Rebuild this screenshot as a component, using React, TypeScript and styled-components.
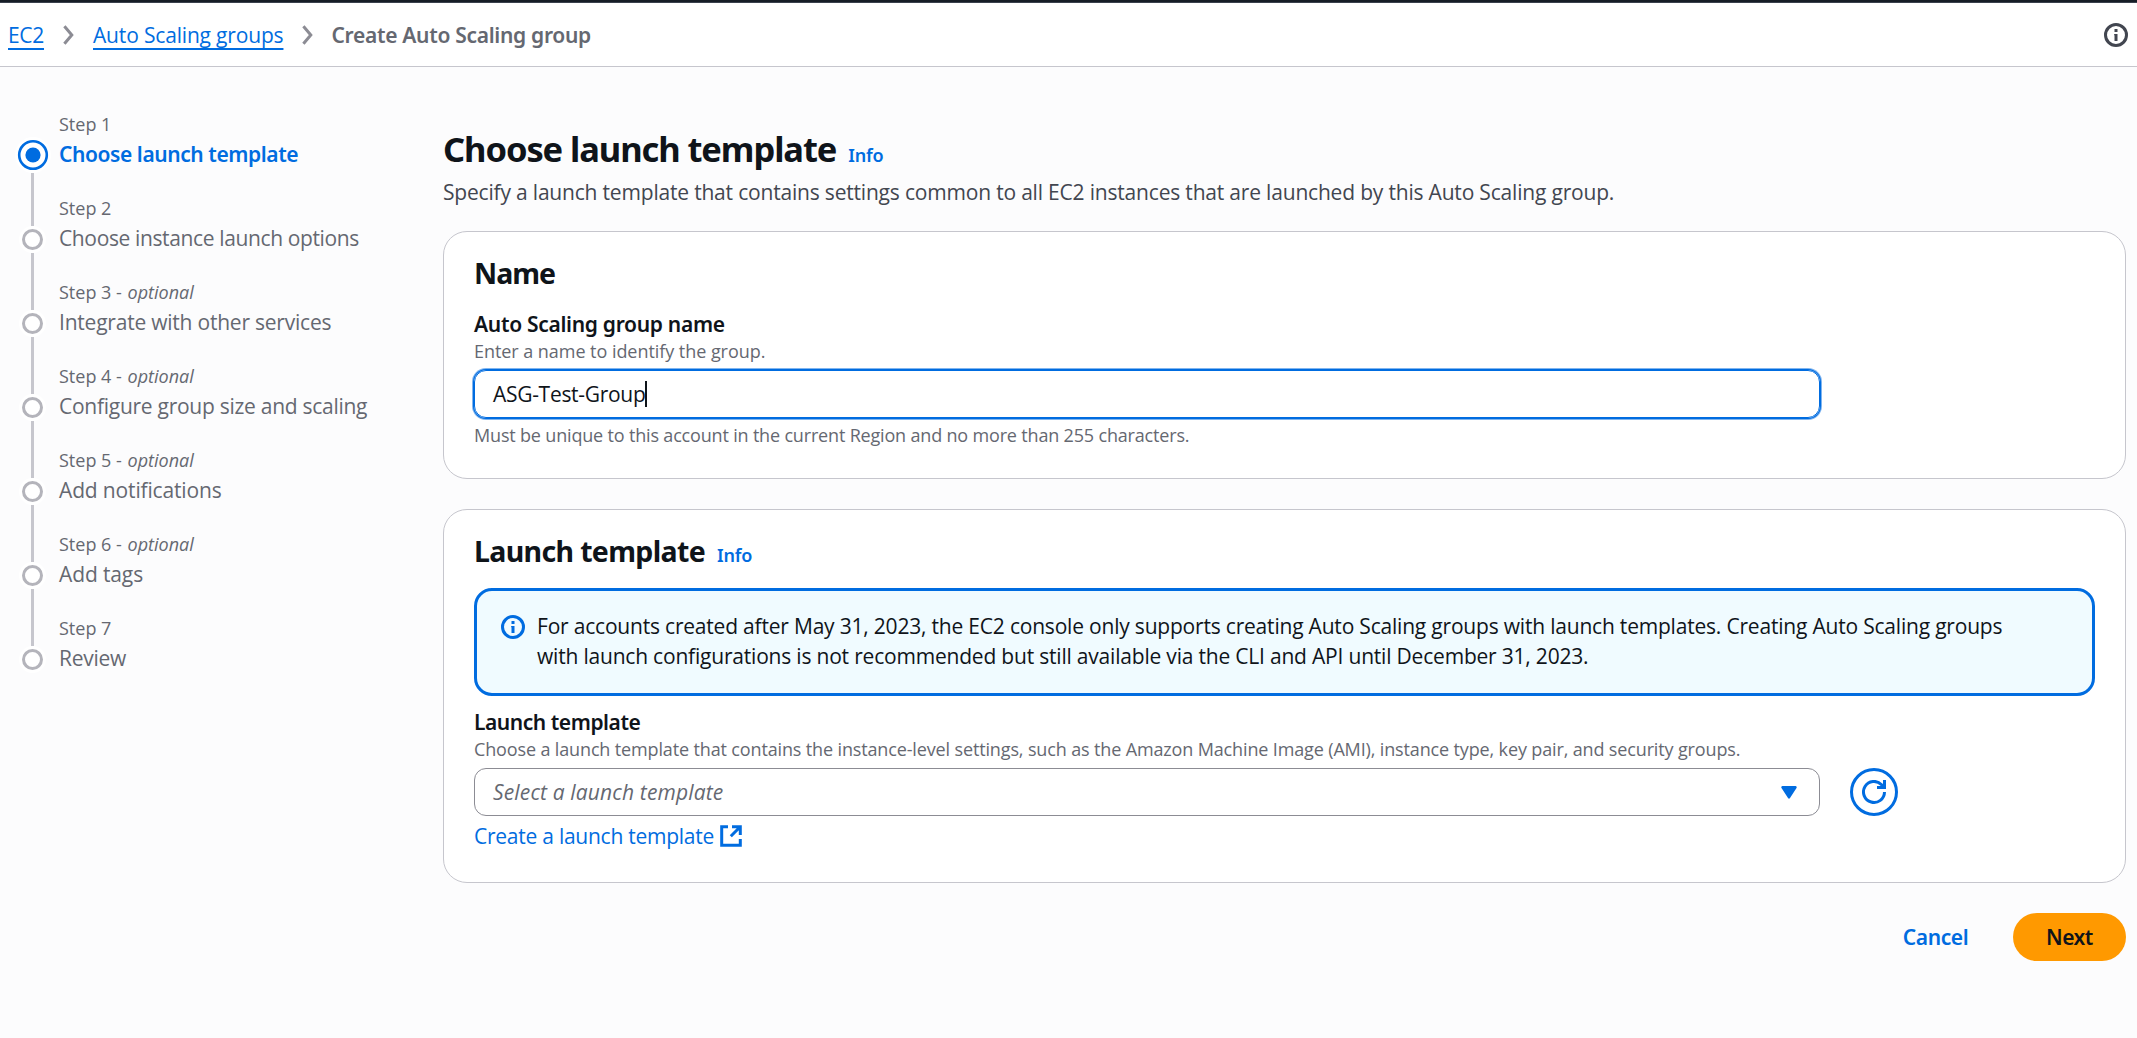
import React from "react";
import styled, { createGlobalStyle } from "styled-components";

const color = {
  blue: "#006ce0",
  text: "#0f141a",
  body: "#424650",
  muted: "#656871",
  line: "#c6c6cd",
  field: "#8c8c94",
  page: "#fcfcfd",
};

const strong = `
  font-family: "Noto Sans", "Open Sans", sans-serif;
  font-weight: 600;
`;

const GlobalStyle = createGlobalStyle`
  *, *::before { box-sizing: border-box; }
  body {
    margin: 0;
    background: ${color.page};
    color: ${color.text};
    font-family: "Open Sans", "Noto Sans", sans-serif;
    font-size: 21px;
    line-height: 30px;
  }
  h1, h2, p, ol { margin: 0; padding: 0; }
  svg { display: block; flex: none; }
`;

type Tracked = { $track?: number };

const Page = styled.div`
  min-height: 1038px;
  white-space: nowrap;
`;

const TopStrip = styled.div`
  height: 3px;
  background: #161d26;
  border-bottom: 1px solid #3a414d;
`;

const BreadcrumbBar = styled.header`
  display: flex;
  align-items: center;
  height: 64px;
  padding: 0 9px 0 8px;
  background: #fff;
  border-bottom: 1px solid ${color.line};
`;

const Breadcrumbs = styled.nav`
  display: flex;
  align-items: center;
  flex: 1;
  gap: 19px;
`;

const Crumb = styled.a<Tracked>`
  color: ${color.blue};
  letter-spacing: ${(p) => p.$track ?? 0}px;
  text-decoration: underline;
  text-decoration-thickness: 2px;
  text-underline-offset: 5px;
  text-decoration-skip-ink: none;
`;

const CurrentCrumb = styled.span`
  ${strong}
  color: ${color.muted};
  margin-left: -1px;
  letter-spacing: -0.3px;
`;

const Body = styled.div`
  display: grid;
  grid-template-columns: 443px 1683px;
`;

const Steps = styled.ol`
  list-style: none;
  padding: 44px 0 0 15px;
`;

const Step = styled.li`
  display: flex;
  gap: 9px;
  height: 84px;
`;

const StepText = styled.div`
  padding-top: 1px;
`;

const Marker = styled.div`
  display: flex;
  flex-direction: column;
  align-items: center;
  width: 35px;
`;

const Rail = styled.div<{ $before?: boolean; $hidden?: boolean }>`
  width: 3px;
  background: ${(p) => (p.$hidden ? "transparent" : color.line)};
  ${(p) => (p.$before ? "height: 31px;" : "flex: 1;")}
`;

const Dot = styled.div`
  width: 27px;
  height: 27px;
  border: 3px solid #fff;
  border-radius: 50%;
  background: #fff;

  &::before {
    content: "";
    display: block;
    width: 21px;
    height: 21px;
    border: 3px solid #b4b4bb;
    border-radius: 50%;
  }
`;

const ActiveMarkerSpace = styled.div`
  height: 26px;
`;

const StepLabel = styled.div`
  color: ${color.muted};
  font-size: 18px;
  line-height: 24px;
  margin-bottom: 3px;

  i { margin-left: 1px; }
`;

const StepTitle = styled.div<Tracked & { $active?: boolean }>`
  ${(p) => (p.$active ? strong : "")}
  color: ${(p) => (p.$active ? color.blue : color.muted)};
  letter-spacing: ${(p) => p.$track ?? 0}px;
`;

const Main = styled.main`
  padding-top: 59px;
`;

const PageTitle = styled.h1`
  ${strong}
  font-size: 34.5px;
  font-weight: 700;
  line-height: 45px;
  letter-spacing: -1.08px;
`;

const PageIntro = styled.p`
  margin-top: 6px;
  color: ${color.body};
  letter-spacing: -0.19px;
`;

const InfoLink = styled.a`
  ${strong}
  margin-left: 12px;
  color: ${color.blue};
  font-size: 18px;
  line-height: 1;
  letter-spacing: -0.2px;
`;

const Card = styled.section<{ $gap: number }>`
  margin-top: ${(p) => p.$gap}px;
  padding: 23px 30px 31px;
  background: #fff;
  border: 1px solid ${color.line};
  border-radius: 24px;
`;

const CardTitle = styled.h2<Tracked>`
  ${strong}
  font-size: 28.5px;
  font-weight: 700;
  line-height: 36px;
  letter-spacing: ${(p) => p.$track}px;
`;

const FieldLabel = styled.div<Tracked & { $gap: number }>`
  ${strong}
  margin-top: ${(p) => p.$gap}px;
  letter-spacing: ${(p) => p.$track}px;
`;

const Hint = styled.p<Tracked>`
  color: ${color.muted};
  font-size: 18px;
  line-height: 24px;
  letter-spacing: ${(p) => p.$track}px;
`;

const TextInput = styled.div`
  display: flex;
  align-items: center;
  width: 1346px;
  height: 48px;
  margin: 7px 0 5px;
  padding-left: 18px;
  border: 1px solid ${color.blue};
  border-radius: 12px;
  box-shadow: 0 0 0 1px ${color.blue}, 0 0 0 2px #80b5ef;
  letter-spacing: -0.3px;
`;

const Caret = styled.span`
  width: 2px;
  height: 26px;
  background: ${color.text};
`;

const Alert = styled.div`
  display: flex;
  gap: 12px;
  height: 108px;
  margin-top: 19px;
  padding: 20px 24px;
  background: #f0fbff;
  border: 3px solid ${color.blue};
  border-radius: 18px;
  letter-spacing: -0.2px;

  svg { margin-top: 4px; }
`;

const SelectRow = styled.div`
  display: flex;
  gap: 30px;
  margin: 7px 0 5px;
`;

const Select = styled.div`
  display: flex;
  align-items: center;
  justify-content: space-between;
  width: 1346px;
  height: 48px;
  padding: 0 22px 0 18px;
  border: 1px solid ${color.field};
  border-radius: 12px;
`;

const Placeholder = styled.span`
  color: ${color.muted};
  font-style: italic;
  letter-spacing: 0.15px;
`;

const RefreshButton = styled.button`
  display: grid;
  place-items: center;
  width: 48px;
  height: 48px;
  padding: 0;
  background: #fff;
  border: 3px solid ${color.blue};
  border-radius: 50%;
`;

const ExternalLink = styled.a`
  display: flex;
  align-items: center;
  gap: 6px;
  color: ${color.blue};
  letter-spacing: -0.25px;
`;

const Actions = styled.footer`
  display: flex;
  justify-content: flex-end;
  margin-top: 30px;
`;

const Button = styled.button<{ $primary?: boolean }>`
  ${strong}
  width: 113px;
  height: 48px;
  margin-left: 21px;
  padding: 0 0 1px;
  border: 0;
  border-radius: 24px;
  background: ${(p) => (p.$primary ? "#ff9900" : "transparent")};
  color: ${(p) => (p.$primary ? color.text : color.blue)};
  font-size: 21px;
  line-height: 30px;
  letter-spacing: ${(p) => (p.$primary ? -0.5 : -0.4)}px;
`;

const Chevron = () => (
  <svg width="11" height="20" viewBox="0 0 11 20" fill="none" stroke={color.field} strokeWidth="3">
    <path d="M1.4 1.2 L8.8 10 L1.4 18.8" />
  </svg>
);

const InfoIcon = ({ stroke }: { stroke: string }) => (
  <svg width="24" height="24" viewBox="0 0 24 24" fill="none" stroke={stroke} strokeWidth="3">
    <circle cx="12" cy="12" r="10.5" />
    <path d="M12 11v7M12 6v3" />
    <path d="M10.3 11.6h1.7" strokeWidth="1.2" />
  </svg>
);

const ActiveDot = () => (
  <svg width="36" height="36" viewBox="0 0 36 36">
    <circle cx="18" cy="18" r="18" fill="#fff" />
    <circle cx="18" cy="18" r="13.8" fill="none" stroke={color.blue} strokeWidth="2.6" />
    <circle cx="18" cy="18" r="7.6" fill={color.blue} />
  </svg>
);

const CaretDown = () => (
  <svg width="16" height="13" viewBox="0 0 16 13" fill={color.blue}>
    <path d="M1.5 0h13a1.2 1.2 0 0 1 1 1.9L9 12a1.2 1.2 0 0 1-2 0L.5 1.9A1.2 1.2 0 0 1 1.5 0z" />
  </svg>
);

const RefreshIcon = () => (
  <svg width="24" height="24" viewBox="0 0 24 24" fill="none" stroke={color.blue} strokeWidth="3">
    <path d="M22.5 12A10.5 10.5 0 1 1 19.6 4.7L21.5 7" />
    <path d="M22.5 0V7.5H15" />
  </svg>
);

const ExternalIcon = () => (
  <svg width="22" height="22" viewBox="0 0 22 22" fill="none" stroke={color.blue} strokeWidth="3">
    <path d="M8 1.7H1.7V20.3H20.3V14" />
    <path d="M12 1.7H20.3V10M20 2L10.8 11.2" />
  </svg>
);

const steps = [
  { title: "Choose launch template", track: -0.42 },
  { title: "Choose instance launch options", track: -0.37 },
  { title: "Integrate with other services", optional: true, track: -0.22 },
  { title: "Configure group size and scaling", optional: true, track: -0.27 },
  { title: "Add notifications", optional: true, track: -0.15 },
  { title: "Add tags", optional: true, track: -0.12 },
  { title: "Review", track: -0.25 },
];

export default function App() {
  return (
    <Page>
      <GlobalStyle />
      <TopStrip />
      <BreadcrumbBar>
        <Breadcrumbs>
          <Crumb $track={-0.3}>EC2</Crumb>
          <Chevron />
          <Crumb $track={-0.17}>Auto Scaling groups</Crumb>
          <Chevron />
          <CurrentCrumb>Create Auto Scaling group</CurrentCrumb>
        </Breadcrumbs>
        <InfoIcon stroke={color.body} />
      </BreadcrumbBar>
      <Body>
        <Steps>
          {steps.map((step, i) => (
            <Step key={step.title}>
              <Marker>
                {i === 0 ? (
                  <>
                    <ActiveMarkerSpace />
                    <ActiveDot />
                  </>
                ) : (
                  <>
                    <Rail $before />
                    <Dot />
                  </>
                )}
                <Rail $hidden={i === steps.length - 1} />
              </Marker>
              <StepText>
                <StepLabel>
                  Step {i + 1}
                  {step.optional && (
                    <>
                      {" - "}
                      <i>optional</i>
                    </>
                  )}
                </StepLabel>
                <StepTitle $active={i === 0} $track={step.track}>
                  {step.title}
                </StepTitle>
              </StepText>
            </Step>
          ))}
        </Steps>
        <Main>
          <PageTitle>
            Choose launch template
            <InfoLink>Info</InfoLink>
          </PageTitle>
          <PageIntro>
            Specify a launch template that contains settings common to all EC2 instances that are
            launched by this Auto Scaling group.
          </PageIntro>

          <Card $gap={24}>
            <CardTitle $track={-1}>Name</CardTitle>
            <FieldLabel $gap={18} $track={-0.3}>
              Auto Scaling group name
            </FieldLabel>
            <Hint $track={-0.05}>Enter a name to identify the group.</Hint>
            <TextInput>
              ASG-Test-Group
              <Caret />
            </TextInput>
            <Hint $track={-0.175}>
              Must be unique to this account in the current Region and no more than 255 characters.
            </Hint>
          </Card>

          <Card $gap={30}>
            <CardTitle $track={-0.65}>
              Launch template
              <InfoLink>Info</InfoLink>
            </CardTitle>
            <Alert>
              <InfoIcon stroke={color.blue} />
              <p>
                For accounts created after May 31, 2023, the EC2 console only supports creating Auto
                Scaling groups with launch templates. Creating Auto Scaling groups
                <br />
                with launch configurations is not recommended but still available via the CLI and
                API until December 31, 2023.
              </p>
            </Alert>
            <FieldLabel $gap={11} $track={-0.45}>
              Launch template
            </FieldLabel>
            <Hint $track={-0.14}>
              Choose a launch template that contains the instance-level settings, such as the Amazon
              Machine Image (AMI), instance type, key pair, and security groups.
            </Hint>
            <SelectRow>
              <Select>
                <Placeholder>Select a launch template</Placeholder>
                <CaretDown />
              </Select>
              <RefreshButton aria-label="Refresh">
                <RefreshIcon />
              </RefreshButton>
            </SelectRow>
            <ExternalLink>
              Create a launch template
              <ExternalIcon />
            </ExternalLink>
          </Card>

          <Actions>
            <Button>Cancel</Button>
            <Button $primary>Next</Button>
          </Actions>
        </Main>
      </Body>
    </Page>
  );
}
